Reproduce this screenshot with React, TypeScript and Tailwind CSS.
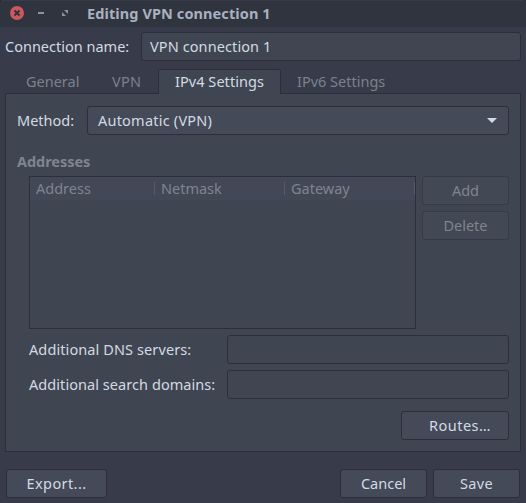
import type { ReactNode } from 'react';

function Button({ className = '', children }: { className?: string; children: ReactNode }) {
  return (
    <button
      className={`flex h-[29px] items-center justify-center rounded-[3px] border pb-px ${className}`}
    >
      {children}
    </button>
  );
}

function Entry({ className = '', value = '' }: { className?: string; value?: string }) {
  return (
    <div className={`flex h-[29px] items-center rounded-[3px] border border-[#2c2e3b] bg-[#404651] px-2 pb-px tracking-[0.1px] ${className}`}>
      {value}
    </div>
  );
}

function TitleBar() {
  return (
    <header className="flex h-[27px] items-center border-t border-[#373b48] bg-[#2f343f] pb-0.5 pl-2.5">
      <svg className="h-3.5 w-[58px] shrink-0" viewBox="0 0 58 14">
        <circle cx="7" cy="7" r="7" fill="#cc575d" />
        <path d="M4.5 4.5l5 5m0-5l-5 5" stroke="#2f343f" strokeWidth="2" />
        <path d="M28 7h6" stroke="#90939b" strokeWidth="2" />
        <path d="M54 4h4v4zM52 6v4h4z" fill="#90939b" />
      </svg>
      <h1 className="ml-[19px] text-[14.5px] font-bold tracking-[0.1px] text-[#a9b1be]">Editing VPN connection 1</h1>
    </header>
  );
}

function Tabs() {
  return (
    <nav className="relative z-10 -mb-px ml-[5px] mt-2 flex h-[25px] text-[#7b818c]">
      <div className="w-[86px] pl-[21px] pt-0.5">General</div>
      <div className="w-[67px] pl-[21px] pt-0.5 tracking-[0.3px]">VPN</div>
      <div className="w-[123px] rounded-t-[2px] border border-b-0 border-[#2c2e3b] bg-[#404651] pl-4 pt-px tracking-[0.05px] text-[#d3dae3]">
        IPv4 Settings
      </div>
      <div className="pl-4 pt-0.5">IPv6 Settings</div>
    </nav>
  );
}

function AddressTable() {
  return (
    <div className="h-[153px] w-[387px] border border-[#2c2e3b]">
      <div className="flex h-[23px] items-center bg-[#424855]">
        <div className="flex h-[13px] w-[125px] items-center border-r border-[#555b68] pb-px pl-1.5">Address</div>
        <div className="flex h-[13px] w-[130px] items-center border-r border-[#555b68] pb-px pl-1.5">Netmask</div>
        <div className="flex h-[13px] w-[130px] items-center border-r border-[#555b68] pb-px pl-1.5">Gateway</div>
      </div>
    </div>
  );
}

export default function App() {
  return (
    <div className="h-[503px] w-[526px] bg-[#20222b]">
      <main className="flex h-[503px] w-[526px] flex-col overflow-hidden rounded-t-[3px] bg-[#383c4a] font-['Noto_Sans',sans-serif] text-[14.5px] leading-5 text-[#d3dae3]">
        <TitleBar />
        <div className="mt-[5px] flex items-center pl-[5px]">
          <label className="w-[136px] pb-px">Connection name:</label>
          <Entry className="w-[380px]" value="VPN connection 1" />
        </div>
        <Tabs />
        <section className="ml-[5px] h-[359px] w-[516px] border border-[#2c2e3b] bg-[#404651] px-[11px] pt-3">
          <div className="flex items-center">
            <label className="w-[70px] pb-px">Method:</label>
            <div className="flex h-[29px] w-[422px] items-center justify-between rounded-[3px] border border-[#2c2e3b] bg-[#444a58] pb-px pl-2.5 pr-[11px] tracking-[0.22px]">
              Automatic (VPN)
              <svg className="h-[5px] w-2.5" viewBox="0 0 10 5">
                <path d="M0 0h10L5 5z" fill="#d3dae3" />
              </svg>
            </div>
          </div>
          <h2 className="mt-4 h-[25px] font-bold tracking-[-0.05px] text-[#7f858f]">Addresses</h2>
          <div className="flex gap-1.5 pl-3 text-[#7f858f]">
            <AddressTable />
            <div className="flex flex-col gap-1.5">
              <Button className="w-[87px] border-[#373a48] bg-[#424854]">Add</Button>
              <Button className="w-[87px] border-[#373a48] bg-[#424854]">Delete</Button>
            </div>
          </div>
          <div className="mt-1.5 flex items-center pl-3">
            <label className="w-[198px] pb-px tracking-[0.1px]">Additional DNS servers:</label>
            <Entry className="w-[282px]" />
          </div>
          <div className="mt-1.5 flex items-center pl-3">
            <label className="w-[198px] pb-px tracking-[0.06px]">Additional search domains:</label>
            <Entry className="w-[282px]" />
          </div>
          <div className="mt-3 flex justify-end">
            <Button className="w-[108px] border-[#2c2e3b] bg-[#444a58] pl-2.5 tracking-[0.5px]">Routes…</Button>
          </div>
        </section>
        <footer className="mt-[17px] flex gap-1.5 pl-1.5">
          <Button className="mr-auto w-[101px] border-[#2c2e3b] bg-[#444a58] tracking-[0.4px]">Export...</Button>
          <Button className="w-[87px] border-[#2c2e3b] bg-[#444a58]">Cancel</Button>
          <Button className="mr-1.5 w-[87px] border-[#2c2e3b] bg-[#444a58] tracking-[0.3px]">Save</Button>
        </footer>
      </main>
    </div>
  );
}
